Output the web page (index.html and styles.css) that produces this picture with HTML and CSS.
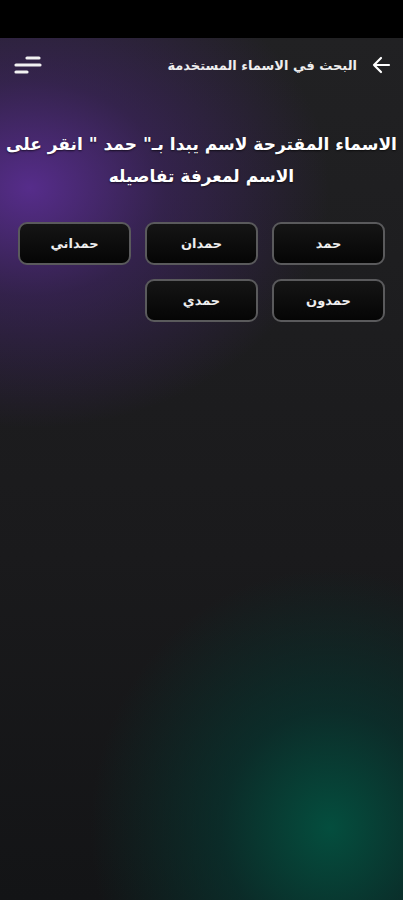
FILE: index.html
```html
<!DOCTYPE html>
<html lang="ar" dir="rtl">
<head>
    <meta charset="UTF-8">
    <meta name="viewport" content="width=device-width, initial-scale=1.0">
    <title>البحث في الاسماء المستخدمة</title>
    <link rel="stylesheet" href="styles.css">
</head>
<body>
    <div class="statusbar"></div>
    <div class="screen">
        <div class="topbar">
            <div class="title">
                <svg class="back" width="20" height="18" viewBox="0 0 20 18">
                    <path d="M2 9h15M10 2l7 7-7 7" fill="none" stroke="#fff" stroke-width="2.2" stroke-linecap="round" stroke-linejoin="round"/>
                </svg>
                <span>البحث في الاسماء المستخدمة</span>
            </div>
            <svg class="menu" width="28" height="22" viewBox="0 0 28 22">
                <path d="M13 4h12M2 11h24M2 18h11" fill="none" stroke="#f2f2f2" stroke-width="3.2" stroke-linecap="round"/>
            </svg>
        </div>

        <h1 class="heading">الاسماء المقترحة لاسم يبدا بـ" حمد " انقر على الاسم لمعرفة تفاصيله</h1>

        <div class="names">
            <button class="name">حمد</button>
            <button class="name">حمدان</button>
            <button class="name">حمداني</button>
            <button class="name">حمدون</button>
            <button class="name">حمدي</button>
        </div>
    </div>
</body>
</html>
```

FILE: styles.css
```css
html, body {
    margin: 0;
    height: 100%;
}
body {
    font-family: "DejaVu Sans", sans-serif;
    background: #000;
    color: #fff;
}
.statusbar {
    height: 38px;
    background: #000;
}
.screen {
    height: 862px;
    background:
        radial-gradient(ellipse 300px 240px at 30px 150px, rgba(92,46,150,0.9) 0%, rgba(72,38,118,0.5) 45%, rgba(26,26,28,0) 100%),
        radial-gradient(ellipse 240px 260px at 330px 790px, rgba(4,78,62,1) 0%, rgba(6,56,50,0.65) 45%, rgba(20,22,24,0) 100%),
        linear-gradient(180deg, #212123 0%, #1a1a1c 60%, #131416 100%);
    padding: 0 12px;
    box-sizing: border-box;
}
.topbar {
    display: flex;
    align-items: center;
    justify-content: space-between;
    height: 54px;
}
.title {
    display: flex;
    align-items: center;
    gap: 14px;
    font-size: 13px;
    font-weight: bold;
    color: #eee;
}
.back {
    transform: scaleX(-1);
}
.menu {
    margin-left: 2px;
}
.heading {
    margin: 36px -6px 0;
    font-size: 17px;
    font-weight: bold;
    line-height: 32px;
    text-align: center;
    text-shadow: 0 1px 2px rgba(0,0,0,0.6);
}
.names {
    display: grid;
    grid-template-columns: repeat(3, 113px);
    gap: 14px;
    margin-top: 30px;
    padding: 0 6px;
}
.name {
    height: 43px;
    border: 2px solid #5a5a5c;
    border-radius: 9px;
    background: linear-gradient(180deg, #151515 0%, #050505 100%);
    color: #eee;
    font-family: "DejaVu Sans", sans-serif;
    font-size: 13px;
    font-weight: bold;
}
```
